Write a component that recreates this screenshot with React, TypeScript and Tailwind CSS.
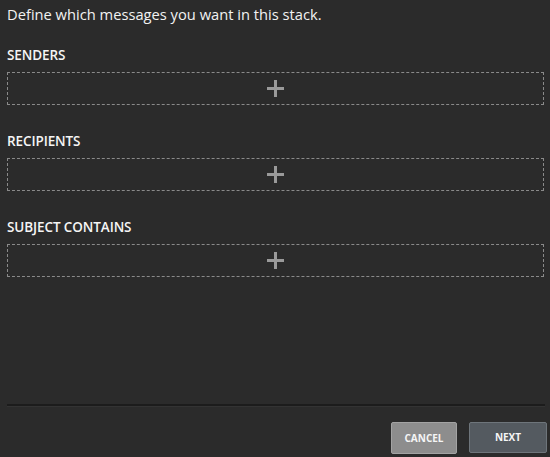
const sections = ['SENDERS', 'RECIPIENTS', 'SUBJECT CONTAINS']

function DropBox() {
  return (
    <button className="flex h-[33px] w-full items-center justify-center border border-dashed border-[#8a8a8a]">
      <svg width="17" height="17" viewBox="0 0 17 17" className="text-[#9a9a9a]">
        <rect x="7" y="0" width="3" height="17" fill="currentColor" />
        <rect x="0" y="7" width="17" height="3" fill="currentColor" />
      </svg>
    </button>
  )
}

export default function App() {
  return (
    <div className="flex h-[457px] w-[550px] flex-col bg-[#2b2b2b] font-['Open_Sans',sans-serif] text-white">
      <div className="pl-[7px] pr-[6px] pt-[3px]">
        <h1 className="text-[14.7px] leading-[22px] text-[#f2f2f2]">
          Define which messages you want in this stack.
        </h1>

        <div className="mt-[22px] space-y-[28px]">
          {sections.map((s) => (
            <div key={s}>
              <h2 className="mb-[8px] text-[13.5px] font-semibold leading-[17px] tracking-[-0.1px] text-[#f5f5f5]">{s}</h2>
              <DropBox />
            </div>
          ))}
        </div>
      </div>

      <div className="mt-auto pl-[7px] pr-[5px]">
        <div className="border-t-2 border-b border-t-[#1c1c1c] border-b-[#333333]" />
      </div>
      <div className="flex justify-end gap-[12px] pb-[3px] pr-[3px] pt-[15px]">
        <button className="h-[32px] w-[66px] rounded-[2px] border border-[#a3a3a3] bg-[#8d8d8d] text-[10px] font-bold text-[#f5f5f5]">
          CANCEL
        </button>
        <button className="h-[31px] w-[78px] rounded-[2px] border border-[#6e757b] bg-[#545a60] text-[10px] font-bold text-[#f5f5f5]">
          NEXT
        </button>
      </div>
    </div>
  )
}
